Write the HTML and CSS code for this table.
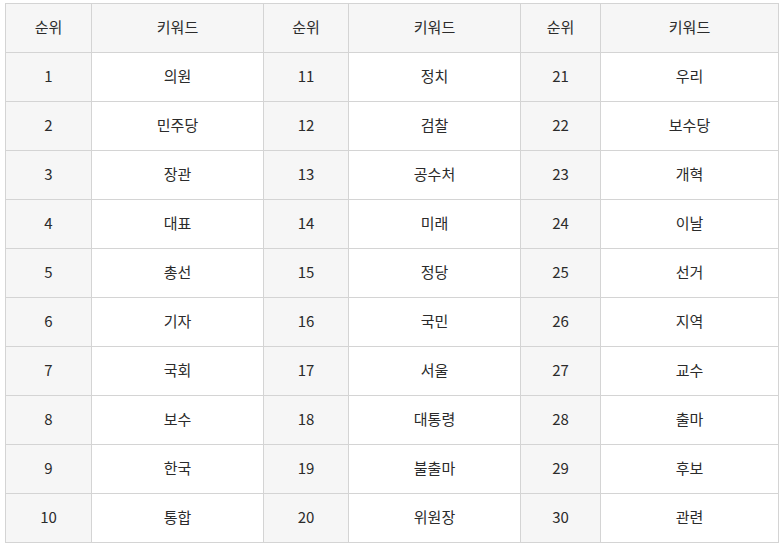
FILE: index.html
```html
<!DOCTYPE html>
<html lang="ko">
<head>
<meta charset="utf-8">
<link rel="stylesheet" href="styles.css">
</head>
<body>
<table class="kw">
<colgroup>
<col class="c1"><col class="c2"><col class="c3"><col class="c4"><col class="c5"><col class="c6">
</colgroup>
<thead>
<tr><th>순위</th><th>키워드</th><th>순위</th><th>키워드</th><th>순위</th><th>키워드</th></tr>
</thead>
<tbody>
<tr><td class="rk">1</td><td>의원</td><td class="rk">11</td><td>정치</td><td class="rk">21</td><td>우리</td></tr>
<tr><td class="rk">2</td><td>민주당</td><td class="rk">12</td><td>검찰</td><td class="rk">22</td><td>보수당</td></tr>
<tr><td class="rk">3</td><td>장관</td><td class="rk">13</td><td>공수처</td><td class="rk">23</td><td>개혁</td></tr>
<tr><td class="rk">4</td><td>대표</td><td class="rk">14</td><td>미래</td><td class="rk">24</td><td>이날</td></tr>
<tr><td class="rk">5</td><td>총선</td><td class="rk">15</td><td>정당</td><td class="rk">25</td><td>선거</td></tr>
<tr><td class="rk">6</td><td>기자</td><td class="rk">16</td><td>국민</td><td class="rk">26</td><td>지역</td></tr>
<tr><td class="rk">7</td><td>국회</td><td class="rk">17</td><td>서울</td><td class="rk">27</td><td>교수</td></tr>
<tr><td class="rk">8</td><td>보수</td><td class="rk">18</td><td>대통령</td><td class="rk">28</td><td>출마</td></tr>
<tr><td class="rk">9</td><td>한국</td><td class="rk">19</td><td>불출마</td><td class="rk">29</td><td>후보</td></tr>
<tr><td class="rk">10</td><td>통합</td><td class="rk">20</td><td>위원장</td><td class="rk">30</td><td>관련</td></tr>
</tbody>
</table>
</body>
</html>
```

FILE: styles.css
```css
html, body {
  margin: 0;
  padding: 0;
  background: #fff;
}
body {
  padding: 3px 0 0 5px;
  font-family: "Noto Sans CJK KR", "Noto Sans", sans-serif;
  font-size: 15px;
  color: #2b2b2b;
}
.kw {
  border-collapse: collapse;
  table-layout: fixed;
  width: 773px;
}
.c1 { width: 86px; }
.c2 { width: 172px; }
.c3 { width: 85px; }
.c4 { width: 172px; }
.c5 { width: 80px; }
.c6 { width: 178px; }
.kw th, .kw td {
  border: 1px solid #d4d4d4;
  height: 45px;
  padding: 0 0 3px;
  text-align: center;
  vertical-align: middle;
  font-weight: normal;
  line-height: 20px;
}
.kw th {
  background: #f6f6f6;
}
.kw td.rk {
  background: #f6f6f6;
}
```
